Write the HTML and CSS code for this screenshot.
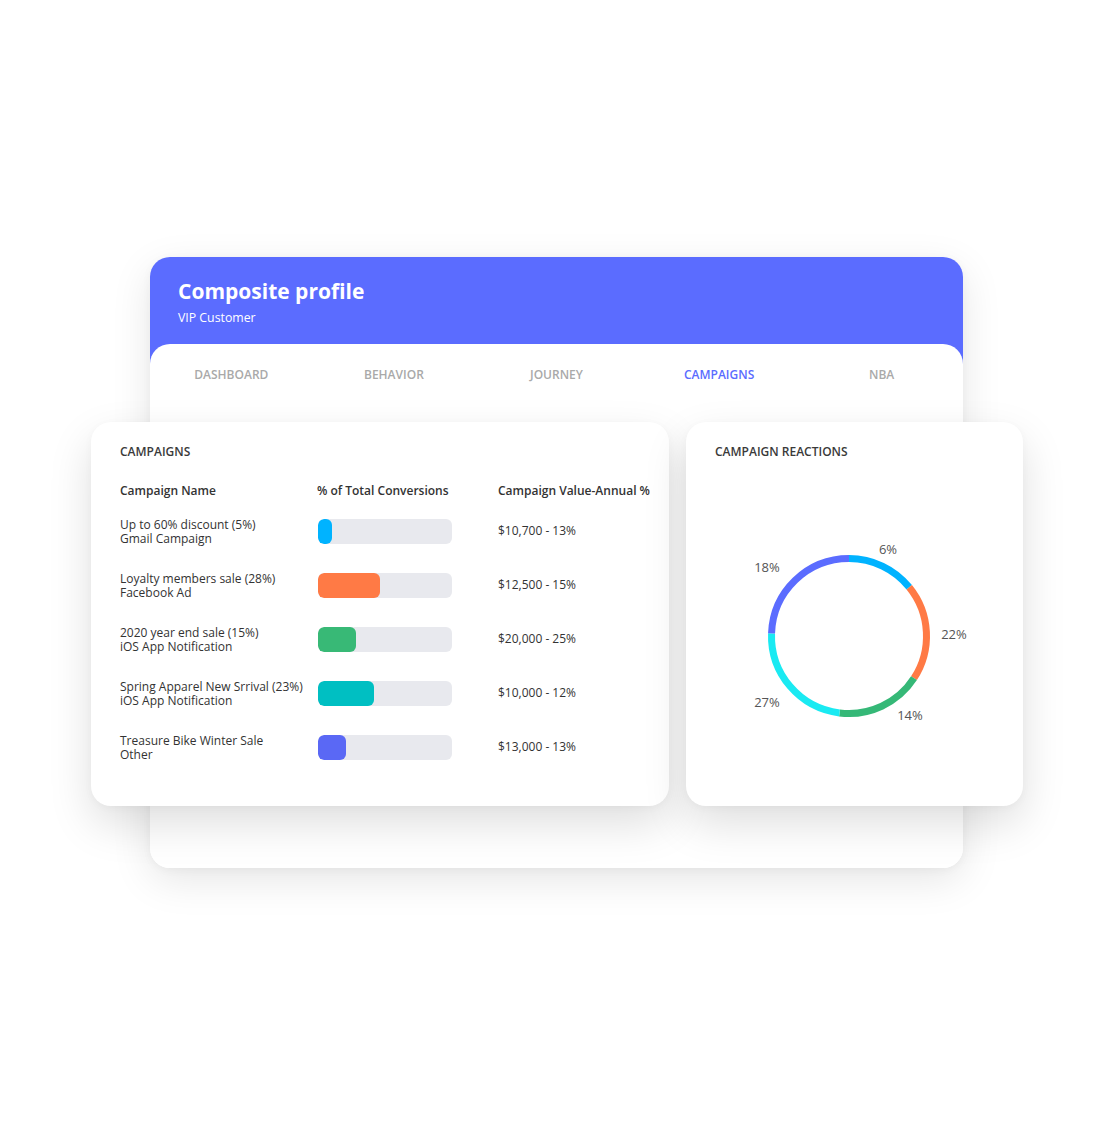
FILE: index.html
```html
<!DOCTYPE html>
<html lang="en">
<head>
<meta charset="utf-8">
<title>Composite profile</title>
<link rel="stylesheet" href="styles.css">
</head>
<body>
<div class="stage">
  <div class="profile">
    <div class="profile-head">
      <h1 class="title">Composite profile</h1>
      <div class="subtitle">VIP Customer</div>
    </div>
    <div class="profile-body">
      <nav class="tabs">
        <span class="tab">DASHBOARD</span>
        <span class="tab">BEHAVIOR</span>
        <span class="tab">JOURNEY</span>
        <span class="tab active">CAMPAIGNS</span>
        <span class="tab">NBA</span>
      </nav>
    </div>
  </div>

  <div class="cards">
    <section class="card campaigns">
      <div class="card-title">CAMPAIGNS</div>
      <div class="table">
        <div class="th">Campaign Name</div>
        <div class="th">% of Total Conversions</div>
        <div class="th">Campaign Value-Annual %</div>

        <div class="name">Up to 60% discount (5%)<br>Gmail Campaign</div>
        <div class="bar"><span class="fill c-blue" style="width:14px"></span></div>
        <div class="value">$10,700 - 13%</div>

        <div class="name">Loyalty members sale (28%)<br>Facebook Ad</div>
        <div class="bar"><span class="fill c-orange" style="width:62px"></span></div>
        <div class="value">$12,500 - 15%</div>

        <div class="name">2020 year end sale (15%)<br>iOS App Notification</div>
        <div class="bar"><span class="fill c-green" style="width:38px"></span></div>
        <div class="value">$20,000 - 25%</div>

        <div class="name">Spring Apparel New Srrival (23%)<br>iOS App Notification</div>
        <div class="bar"><span class="fill c-teal" style="width:56px"></span></div>
        <div class="value">$10,000 - 12%</div>

        <div class="name last">Treasure Bike Winter Sale<br>Other</div>
        <div class="bar last"><span class="fill c-indigo" style="width:28px"></span></div>
        <div class="value last">$13,000 - 13%</div>
      </div>
    </section>

    <section class="card reactions">
      <div class="card-title pad">CAMPAIGN REACTIONS</div>
      <svg class="donut" width="337" height="346" viewBox="0 0 337 346">
        <g fill="none" stroke-width="7">
          <path stroke="#00b3ff" d="M163 98.5 A77.5 77.5 0 0 1 223.23 127.23"/>
          <path stroke="#ff7a45" d="M223.23 127.23 A77.5 77.5 0 0 1 228 218.21"/>
          <path stroke="#35b877" d="M228 218.21 A77.5 77.5 0 0 1 153.55 252.92"/>
          <path stroke="#1aeaf2" d="M153.55 252.92 A77.5 77.5 0 0 1 85.55 173.3"/>
          <path stroke="#5b6cff" d="M85.55 173.3 A77.5 77.5 0 0 1 163 98.5"/>
        </g>
        <g class="labels">
          <text x="202" y="89">6%</text>
          <text x="268" y="174">22%</text>
          <text x="224" y="255">14%</text>
          <text x="81" y="242">27%</text>
          <text x="81" y="107">18%</text>
        </g>
      </svg>
    </section>
  </div>
</div>
</body>
</html>
```

FILE: styles.css
```css
* { box-sizing: border-box; }

body {
  margin: 0;
  background: #ffffff;
  font-family: "Open Sans", "Noto Sans", sans-serif;
  color: #333;
}

.stage {
  width: 1114px;
  height: 1125px;
  display: grid;
  grid-template-columns: 1fr;
  grid-template-rows: 1fr;
}

.profile {
  grid-area: 1 / 1;
  align-self: start;
  justify-self: start;
  margin: 257px 0 0 150px;
  width: 813px;
  height: 611px;
  border-radius: 20px;
  overflow: hidden;
  background: #fff;
  display: flex;
  flex-direction: column;
  box-shadow: 0 12px 40px rgba(0, 0, 0, 0.10), 0 2px 10px rgba(0, 0, 0, 0.04);
}

.profile-head {
  background: #5b6cff;
  height: 107px;
  padding: 20px 28px 0;
  color: #fff;
}

.title {
  margin: 0;
  font-size: 21px;
  line-height: 29px;
  font-weight: 700;
}

.subtitle {
  margin-top: 3px;
  font-size: 12.3px;
  line-height: 18px;
}

.profile-body {
  flex: 1;
  margin-top: -20px;
  background: #fff;
  border-radius: 20px 20px 0 0;
  position: relative;
}

.tabs {
  display: grid;
  grid-template-columns: repeat(5, 1fr);
  padding-top: 23px;
}

.tab {
  text-align: center;
  font-size: 12px;
  line-height: 16px;
  font-weight: 600;
  color: #a9a9a9;
}

.tab.active { color: #5b6cff; }

.cards {
  grid-area: 1 / 1;
  align-self: start;
  justify-self: start;
  margin: 422px 0 0 91px;
  display: flex;
  gap: 17px;
  position: relative;
  z-index: 2;
}

.card {
  background: #fff;
  border-radius: 20px;
  height: 384px;
  box-shadow: 0 18px 44px rgba(0, 0, 0, 0.13), 0 2px 8px rgba(0, 0, 0, 0.03);
}

.campaigns {
  width: 578px;
  padding: 22px 0 0 29px;
}

.reactions {
  width: 337px;
}

.card-title {
  font-size: 12px;
  line-height: 16px;
  font-weight: 600;
  color: #3a3a3a;
  white-space: nowrap;
}

.card-title.pad { padding: 22px 29px 0; }

.table {
  margin-top: 23px;
  display: grid;
  grid-template-columns: 197px 181px 1fr;
  grid-auto-rows: auto;
  align-items: center;
  white-space: nowrap;
}

.th {
  font-size: 12px;
  line-height: 16px;
  font-weight: 600;
  color: #333;
  margin-bottom: 18px;
}

.name {
  font-size: 12px;
  line-height: 14px;
  color: #333;
  height: 28px;
  margin-bottom: 26px;
  padding-top: 1px;
}

.bar {
  width: 134px;
  height: 25px;
  border-radius: 6px;
  background: #e8e9ee;
  margin-left: 1px;
  margin-bottom: 26px;
  overflow: hidden;
  display: flex;
}

.fill {
  display: block;
  height: 100%;
  border-radius: 6px;
}

.value {
  font-size: 12px;
  line-height: 16px;
  color: #333;
  margin-bottom: 26px;
}

.name.last, .bar.last, .value.last { margin-bottom: 0; }

.c-blue { background: #00b3ff; }
.c-orange { background: #ff7a45; }
.c-green { background: #38b976; }
.c-teal { background: #00bfc2; }
.c-indigo { background: #5a68f5; }

.donut { display: block; }

.labels text {
  font-family: "Open Sans", "Noto Sans", sans-serif;
  font-size: 13px;
  fill: #555;
  text-anchor: middle;
  dominant-baseline: central;
}
```
